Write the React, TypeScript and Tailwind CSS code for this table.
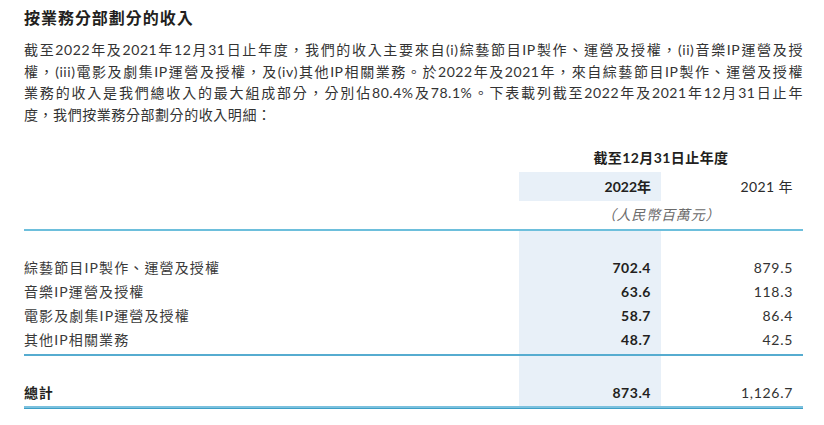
const FONT = "font-['Lato','Noto_Sans_CJK_TC',sans-serif]";

const rows = [
  { label: "綜藝節目IP製作、運營及授權", a: "702.4", b: "879.5" },
  { label: "音樂IP運營及授權", a: "63.6", b: "118.3" },
  { label: "電影及劇集IP運營及授權", a: "58.7", b: "86.4" },
  { label: "其他IP相關業務", a: "48.7", b: "42.5" },
];

const lines = [
  "截至2022年及2021年12月31日止年度，我們的收入主要來自(i)綜藝節目IP製作、運營及授權，(ii)音樂IP運營及授",
  "權，(iii)電影及劇集IP運營及授權，及(iv)其他IP相關業務。於2022年及2021年，來自綜藝節目IP製作、運營及授權",
  "業務的收入是我們總收入的最大組成部分，分別佔80.4%及78.1%。下表載列截至2022年及2021年12月31日止年",
];

export default function App() {
  return (
    <div className={`w-[824px] h-[425px] bg-white pl-[24px] pr-[21px] text-[#2b2b2b] ${FONT}`}>
      {/* Title */}
      <h2 className="pt-[9px] text-[16px] leading-[18px] font-bold tracking-[0.06em] text-[#231f20]">
        按業務分部劃分的收入
      </h2>

      {/* Paragraph */}
      <div className="mt-[12px] text-[14px] leading-[21.5px] tracking-[0.04em] text-[#333333]">
        {lines.map((l) => (
          <p key={l} className="text-justify [text-align-last:justify] whitespace-nowrap">
            {l}
          </p>
        ))}
        <p>度，我們按業務分部劃分的收入明細：</p>
      </div>

      {/* Table */}
      <div className="mt-[23px] text-[14px]">
        <div className="flex">
          <div className="flex-1" />
          <div className="w-[284px] text-center font-bold leading-[20px] tracking-[0.03em] text-[#231f20]">
            截至12月31日止年度
          </div>
        </div>

        <div className="mt-[4px] flex h-[29px] items-center">
          <div className="flex-1" />
          <div className="flex h-full w-[142px] items-center justify-end bg-[#e8f0f8] pr-[10px] font-bold text-[#231f20]">
            2022年
          </div>
          <div className="w-[142px] pr-[10px] text-right tracking-[0.03em]">2021 年</div>
        </div>

        <div className="flex h-[30px] items-start border-b-2 border-[#6dbfdc]">
          <div className="flex-1" />
          <div className="w-[284px] pt-[4px] text-center italic leading-[20px] tracking-[0.06em] text-[#6b6b6b]">
            （人民幣百萬元）
          </div>
        </div>

        {/* Body rows */}
        <div className="flex border-b-2 border-[#56acd0] leading-[24px]">
          <div className="flex-1 pt-[25px] pb-[2px] tracking-[0.08em] text-[#3a3a3a]">
            {rows.map((r) => (
              <div key={r.label} className="h-[24px]">{r.label}</div>
            ))}
          </div>
          <div className="w-[142px] bg-[#e8f0f8] pt-[25px] pb-[2px] pr-[10px] text-right font-bold tracking-[0.04em] text-[#231f20]">
            {rows.map((r) => (
              <div key={r.label} className="h-[24px]">{r.a}</div>
            ))}
          </div>
          <div className="w-[142px] pt-[25px] pb-[2px] pr-[10px] text-right tracking-[0.05em] text-[#333333]">
            {rows.map((r) => (
              <div key={r.label} className="h-[24px]">{r.b}</div>
            ))}
          </div>
        </div>

        {/* Total */}
        <div className="flex border-b-2 border-[#7cc1de] leading-[24px]">
          <div className="flex-1 pt-[25px] pb-[1px] font-bold tracking-[0.05em] text-[#231f20]">總計</div>
          <div className="w-[142px] bg-[#e8f0f8] pt-[25px] pb-[1px] pr-[10px] text-right font-bold tracking-[0.04em] text-[#231f20]">
            873.4
          </div>
          <div className="w-[142px] pt-[25px] pb-[1px] pr-[10px] text-right tracking-[0.05em] text-[#333333]">
            1,126.7
          </div>
        </div>
        <div className="h-[1px] bg-[#3d9fc7]" />
      </div>
    </div>
  );
}
